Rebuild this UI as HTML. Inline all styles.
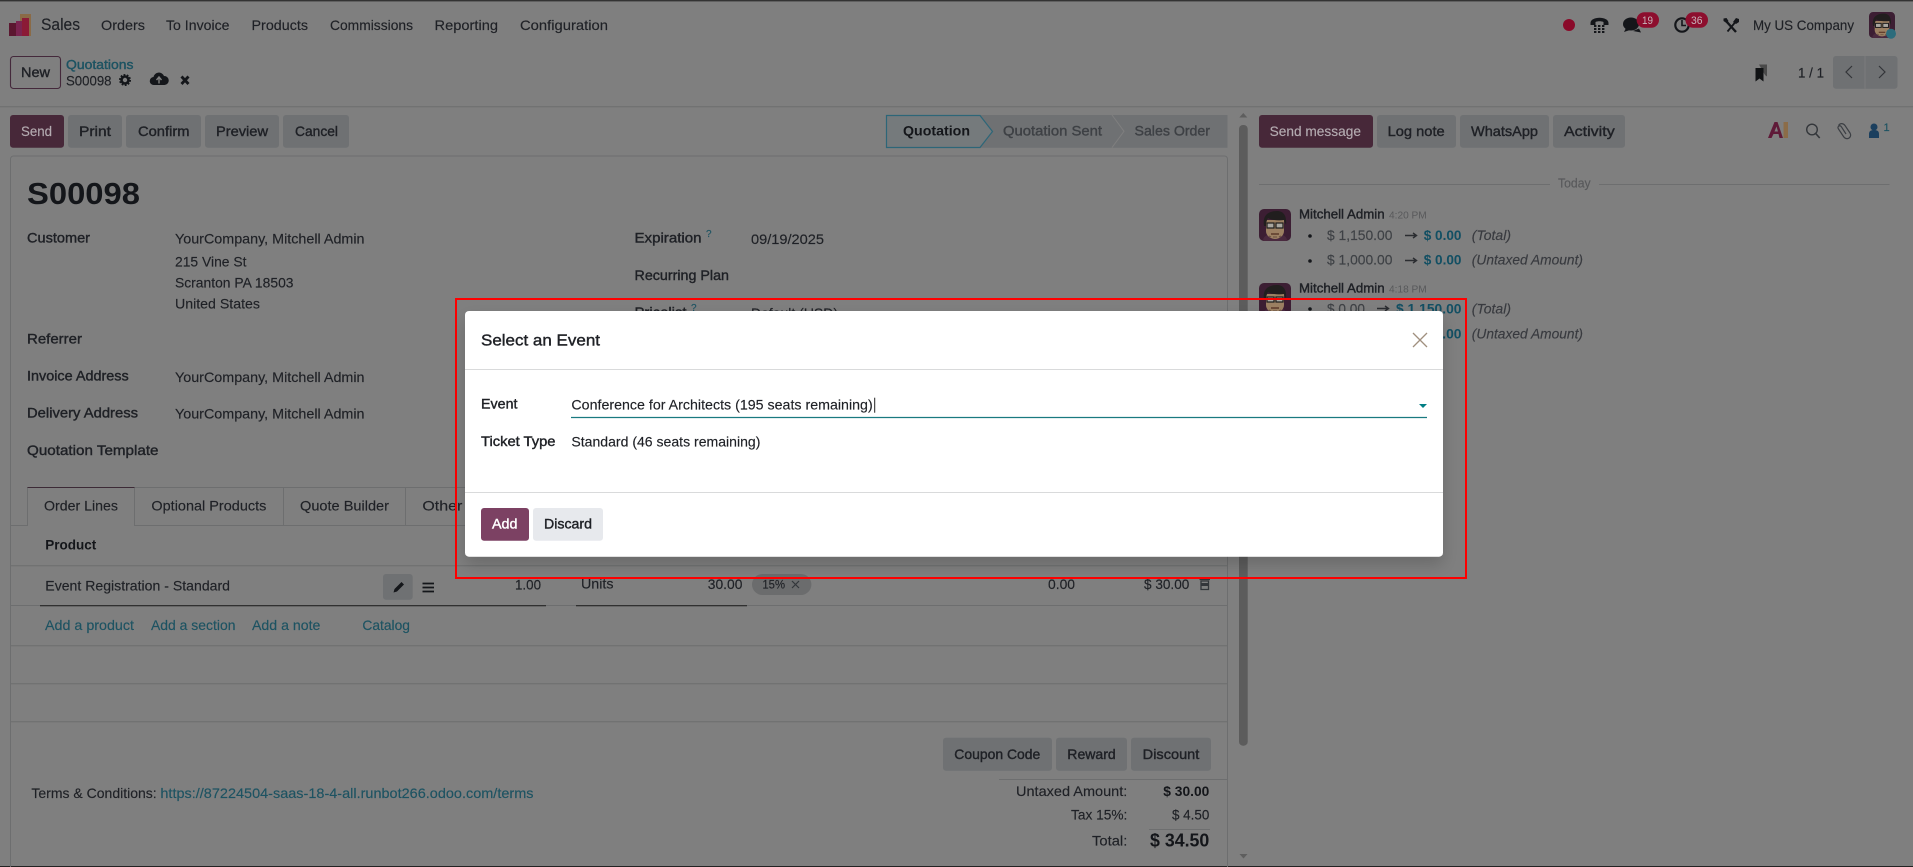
<!DOCTYPE html>
<html lang="en">
<head>
<meta charset="utf-8">
<title>S00098 - Select an Event</title>
<style>
html,body{margin:0;padding:0;width:1913px;height:867px;overflow:hidden;background:#7f7f7f}
svg{display:block}
text{font-family:"Liberation Sans",Arial,sans-serif;font-size:14px;color:#1f2126;fill:currentColor;stroke:currentColor;stroke-width:.15;white-space:pre}
.m{stroke-width:.4}
.b{font-weight:bold;stroke-width:0}
.l{color:#1d5362}
.g{color:#3e4145}
.mu{color:#58595b}
.i{font-style:italic;color:#383a3f}
.hl{color:#124f63;font-weight:bold;stroke-width:0}
.w{color:#fff}
.d{color:#14161a}
.lt{color:#b4abb1}
.ln{stroke:#6d6e6f;stroke-width:1;fill:none}
.btn{fill:#6f7173}
</style>
</head>
<body>
<svg width="1913" height="867" viewBox="0 0 1913 867" xmlns="http://www.w3.org/2000/svg">
<defs>
<filter id="sh" x="-10%" y="-10%" width="120%" height="130%"><feDropShadow dx="0" dy="8" stdDeviation="8" flood-color="#000" flood-opacity=".17"/></filter>
<symbol id="av" viewBox="0 0 32 32">
<rect width="32" height="32" rx="5" fill="#3c1e33"/>
<path d="M4 32c0-5 4-7 12-7s12 2 12 7z" fill="#4a2a3f"/>
<path d="M7 11h18v11c0 5-5 8-9 8s-9-3-9-8z" fill="#9c8062"/>
<path d="M5 17C3 6 10 2 18 2c6 0 10 4 9 14l-2-5C19 12 12 11 9 9c-1 2-2 4-2 8z" fill="#211e1e"/>
<rect x="8" y="14" width="7" height="5" fill="#a9a69f" stroke="#1d1d1d" stroke-width="1.200"/>
<rect x="17" y="14" width="7" height="5" fill="#a9a69f" stroke="#1d1d1d" stroke-width="1.200"/>
<path d="M12 25h8" stroke="#5d3a2a" stroke-width="1.500"/>
<path d="M10 27l2 1M20 28l2-1M14 28h4" stroke="#6a5040" stroke-width="1"/>
</symbol>
</defs>

<rect width="1913" height="867" fill="#7f7f7f"/>
<rect width="1913" height="1.400" fill="#333"/>
<rect y="866" width="1913" height="1" fill="#222"/>

<!-- navbar -->
<rect x="20" y="14" width="11" height="22" fill="#8a6a46"/>
<rect x="9" y="23" width="10" height="13" fill="#5b1730"/>
<rect x="16" y="21" width="7" height="15" fill="#7a2450"/>
<rect x="22" y="18" width="7" height="18" fill="#8b1a36"/>
<text x="41" y="30" textLength="39" lengthAdjust="spacingAndGlyphs" style="font-size:17px">Sales</text>
<text x="101" y="30" textLength="44" lengthAdjust="spacingAndGlyphs">Orders</text>
<text x="166" y="30" textLength="63.500" lengthAdjust="spacingAndGlyphs">To Invoice</text>
<text x="251.500" y="30" textLength="56.500" lengthAdjust="spacingAndGlyphs">Products</text>
<text x="330" y="30" textLength="83" lengthAdjust="spacingAndGlyphs">Commissions</text>
<text x="434.500" y="30" textLength="63.500" lengthAdjust="spacingAndGlyphs">Reporting</text>
<text x="520" y="30" textLength="88" lengthAdjust="spacingAndGlyphs">Configuration</text>

<!-- systray -->
<circle cx="1569" cy="25" r="6" fill="#8a0a2a"/>
<path d="M1590.500 23c0-7 18-7 18 0v2h-5v-3c-2-1-6-1-8 0v3h-5z" fill="#14161a"/>
<g fill="#14161a"><rect x="1594" y="25" width="2.400" height="2"/><rect x="1598" y="25" width="2.400" height="2"/><rect x="1602" y="25" width="2.400" height="2"/><rect x="1594" y="28" width="2.400" height="2"/><rect x="1598" y="28" width="2.400" height="2"/><rect x="1602" y="28" width="2.400" height="2"/><rect x="1594" y="31" width="2.400" height="2"/><rect x="1598" y="31" width="2.400" height="2"/><rect x="1602" y="31" width="2.400" height="2"/></g>
<ellipse cx="1631" cy="24" rx="8" ry="6.500" fill="#14161a"/><path d="M1626 28l-2 4 6-2z" fill="#14161a"/><path d="M1633 31l8 1.500-2-4" fill="#14161a"/>
<rect x="1636.600" y="12.300" width="22.400" height="15.400" rx="7.700" fill="#8d0e2e"/>
<text x="1642" y="24" textLength="11" lengthAdjust="spacingAndGlyphs" style="font-size:11px;color:#c8b6bc;stroke-width:0">19</text>
<circle cx="1682" cy="25" r="6.700" fill="none" stroke="#14161a" stroke-width="2.200"/><path d="M1682 20v5.500h4" fill="none" stroke="#14161a" stroke-width="1.600"/>
<rect x="1685.500" y="12.300" width="22.500" height="15.400" rx="7.700" fill="#8d0e2e"/>
<text x="1691" y="24" textLength="11.500" lengthAdjust="spacingAndGlyphs" style="font-size:11px;color:#c8b6bc;stroke-width:0">36</text>
<path d="M1726 21l10 11" stroke="#14161a" stroke-width="2.400" fill="none"/>
<path d="M1723.500 18.500l3-.5 2 3-2 2-3-2z" fill="#14161a"/>
<path d="M1737.500 19.500l-10 12" stroke="#14161a" stroke-width="1.800" fill="none"/>
<path d="M1733 22l3-4 3 1 0 3-3 2z" fill="#14161a"/>
<text x="1753" y="30" textLength="101" lengthAdjust="spacingAndGlyphs">My US Company</text>
<use href="#av" x="1869" y="12" width="26" height="26"/>
<circle cx="1891" cy="33.700" r="5" fill="#2c6c7c"/>

<!-- control panel -->
<rect x="10.500" y="56.500" width="50" height="32" rx="3" fill="none" stroke="#44293b" stroke-width="1.100"/>
<text x="21" y="77" textLength="29" lengthAdjust="spacingAndGlyphs" class="m">New</text>
<text x="66" y="69" textLength="67.500" lengthAdjust="spacingAndGlyphs" class="l m" style="font-size:13px">Quotations</text>
<text x="66" y="85.300" textLength="45.500" lengthAdjust="spacingAndGlyphs">S00098</text>
<circle cx="125" cy="80" r="3.500" fill="none" stroke="#14161a" stroke-width="2.600"/><circle cx="125" cy="80" r="5.200" fill="none" stroke="#14161a" stroke-width="1.600" stroke-dasharray="1.800 1.470"/>
<path d="M154 85a4 4 0 0 1-.5-8 5.500 5.500 0 0 1 10.500-1 4.500 4.500 0 0 1 .5 9z" fill="#14161a"/><path d="M159 83.500v-5.500M156.500 80l2.500-3 2.500 3" stroke="#7f7f7f" stroke-width="1.400" fill="none"/>
<path d="M181.500 76.500l7 7.500M188.500 76.500l-7 7.500" stroke="#14161a" stroke-width="2.800"/>
<path d="M1759 64.500h8v12l-2-1.500z" fill="#4a4a4a"/>
<path d="M1755.500 68h8v13.500l-4-3-4 3z" fill="#101214"/>
<text x="1798" y="77.300" textLength="26" lengthAdjust="spacingAndGlyphs">1 / 1</text>
<rect x="1833" y="56" width="64.500" height="32.700" rx="3" class="btn"/>
<path d="M1865 56v32.700" stroke="#7f7f7f" stroke-width=".8"/>
<path d="M1852 66l-6 6 6 6M1879 66l6 6-6 6" fill="none" stroke="#333539" stroke-width="1.200"/>
<path d="M0 106.700h1913" class="ln"/>

<!-- action buttons -->
<rect x="10" y="115" width="54" height="32.700" rx="3" fill="#472839"/>
<text x="21" y="136" textLength="31" lengthAdjust="spacingAndGlyphs" class="lt">Send</text>
<rect x="68" y="115" width="54" height="32.700" rx="3" class="btn"/>
<text x="79" y="136" textLength="32" lengthAdjust="spacingAndGlyphs" class="m">Print</text>
<rect x="126" y="115" width="75" height="32.700" rx="3" class="btn"/>
<text x="138" y="136" textLength="51.500" lengthAdjust="spacingAndGlyphs" class="m">Confirm</text>
<rect x="205" y="115" width="74" height="32.700" rx="3" class="btn"/>
<text x="216" y="136" textLength="52" lengthAdjust="spacingAndGlyphs" class="m">Preview</text>
<rect x="283" y="115" width="66" height="32.700" rx="3" class="btn"/>
<text x="295" y="136" textLength="43" lengthAdjust="spacingAndGlyphs" class="m">Cancel</text>

<!-- statusbar -->
<path d="M886 115h341.500v32.700H886z" fill="#6f7173"/>
<path d="M886.500 115.500H980l12.500 16-12.500 16H886.500z" fill="#757a7c" stroke="#2d6678" stroke-width="1.200"/>
<path d="M1112 115l12 16.300-12 16.300" fill="none" stroke="#7f7f7f" stroke-width="1"/>
<text x="903" y="135.700" textLength="67" lengthAdjust="spacingAndGlyphs" class="b d">Quotation</text>
<text x="1003" y="135.700" textLength="99" lengthAdjust="spacingAndGlyphs" class="g m">Quotation Sent</text>
<text x="1134.500" y="135.700" textLength="75.500" lengthAdjust="spacingAndGlyphs" class="g m">Sales Order</text>

<!-- scrollbar -->
<path d="M1243.300 113l-4 4.500h8z" fill="#5e5e5e"/>
<rect x="1239" y="125" width="8.700" height="620.700" rx="4" fill="#5c5c5c"/>
<path d="M1239.500 854h8l-4 4.500z" fill="#5e5e5e"/>

<!-- sheet -->
<path d="M10.500 867V159a3 3 0 0 1 3-3H1224.500a3 3 0 0 1 3 3V867" class="ln"/>
<text x="27" y="204" textLength="113" lengthAdjust="spacingAndGlyphs" class="b d" style="font-size:31px">S00098</text>

<text x="27" y="242.500" textLength="63" lengthAdjust="spacingAndGlyphs" class="m">Customer</text>
<text x="175" y="243.300" textLength="189.500" lengthAdjust="spacingAndGlyphs">YourCompany, Mitchell Admin</text>
<text x="175" y="266.300" textLength="71.500" lengthAdjust="spacingAndGlyphs">215 Vine St</text>
<text x="175" y="287.300" textLength="118.500" lengthAdjust="spacingAndGlyphs">Scranton PA 18503</text>
<text x="175" y="308.500" textLength="85" lengthAdjust="spacingAndGlyphs">United States</text>
<text x="27" y="343.500" textLength="55" lengthAdjust="spacingAndGlyphs" class="m">Referrer</text>
<text x="27" y="380.500" textLength="101.700" lengthAdjust="spacingAndGlyphs" class="m">Invoice Address</text>
<text x="175" y="382" textLength="189.500" lengthAdjust="spacingAndGlyphs">YourCompany, Mitchell Admin</text>
<text x="27" y="417.500" textLength="111" lengthAdjust="spacingAndGlyphs" class="m">Delivery Address</text>
<text x="175" y="418.500" textLength="189.500" lengthAdjust="spacingAndGlyphs">YourCompany, Mitchell Admin</text>
<text x="27" y="455" textLength="131.500" lengthAdjust="spacingAndGlyphs" class="m">Quotation Template</text>

<text x="634.500" y="242.700" textLength="67" lengthAdjust="spacingAndGlyphs" class="m">Expiration</text>
<text x="706" y="237" class="l" style="font-size:10px">?</text>
<text x="751" y="244" textLength="73" lengthAdjust="spacingAndGlyphs">09/19/2025</text>
<text x="634.500" y="280" textLength="94.500" lengthAdjust="spacingAndGlyphs" class="m">Recurring Plan</text>
<text x="634.500" y="317" textLength="52" lengthAdjust="spacingAndGlyphs" class="m">Pricelist</text>
<text x="691" y="311" class="l" style="font-size:10px">?</text>
<text x="751" y="318" textLength="87" lengthAdjust="spacingAndGlyphs">Default (USD)</text>

<!-- tabs -->
<path d="M10.500 525.500H27.500V487.500H134.500V525.500H1227" class="ln"/>
<path d="M27.500 487.500H134.500" stroke="#3c2a36" stroke-width="1"/>
<path d="M134.500 487.500H1227M283.500 487.500v38M405.500 487.500v38" class="ln"/>
<text x="44" y="510.700" textLength="74" lengthAdjust="spacingAndGlyphs">Order Lines</text>
<text x="151.400" y="510.700" textLength="115" lengthAdjust="spacingAndGlyphs">Optional Products</text>
<text x="300" y="510.700" textLength="89" lengthAdjust="spacingAndGlyphs">Quote Builder</text>
<text x="422.400" y="510.700" textLength="71" lengthAdjust="spacingAndGlyphs">Other Info</text>

<!-- table -->
<text x="45.300" y="549.300" textLength="51" lengthAdjust="spacingAndGlyphs" class="b d">Product</text>
<path d="M10.500 565.700H1227M10.500 605.500H1227M10.500 645.700H1227M10.500 683.700H1227M10.500 721.700H1227" class="ln"/>
<text x="45.300" y="590.700" textLength="184.700" lengthAdjust="spacingAndGlyphs">Event Registration - Standard</text>
<rect x="383" y="574" width="29.700" height="25.700" rx="3" class="btn"/>
<path d="M393.500 592.500l1-3.500 7-7 2.500 2.500-7 7z" fill="#14161a"/>
<path d="M422.500 583.500h11.500M422.500 587.500h11.500M422.500 591.500h11.500" stroke="#14161a" stroke-width="1.800"/>
<path d="M40 605.700H546M576 605.700H747" stroke="#1c1c1c" stroke-width="1"/>
<text x="515" y="589.300" textLength="26" lengthAdjust="spacingAndGlyphs">1.00</text>
<text x="581" y="588.700" textLength="32.500" lengthAdjust="spacingAndGlyphs">Units</text>
<text x="707.800" y="589" textLength="34.600" lengthAdjust="spacingAndGlyphs">30.00</text>
<rect x="752" y="574" width="59.400" height="21" rx="10.500" fill="#6b6c6d"/>
<text x="762.400" y="588.500" textLength="22.600" lengthAdjust="spacingAndGlyphs" style="font-size:12px">15%</text>
<path d="M792 581l7 7M799 581l-7 7" stroke="#33363a" stroke-width="1.200"/>
<text x="1048" y="589" textLength="27" lengthAdjust="spacingAndGlyphs">0.00</text>
<text x="1144" y="589" textLength="45.300" lengthAdjust="spacingAndGlyphs">$ 30.00</text>
<path d="M1199.500 579.500h10.500M1203 579.500v-1.500h3.500v1.500" fill="none" stroke="#33363a" stroke-width="1.200"/>
<path d="M1201 581v8.500h7.500V581z" fill="none" stroke="#33363a" stroke-width="1.300"/>
<rect x="1201" y="583" width="7.500" height="3" fill="#33363a"/>
<text x="45" y="630" textLength="89" lengthAdjust="spacingAndGlyphs" class="l">Add a product</text>
<text x="151" y="630" textLength="84.500" lengthAdjust="spacingAndGlyphs" class="l">Add a section</text>
<text x="252" y="630" textLength="68.400" lengthAdjust="spacingAndGlyphs" class="l">Add a note</text>
<text x="362.400" y="630" textLength="47.600" lengthAdjust="spacingAndGlyphs" class="l">Catalog</text>

<!-- footer -->
<rect x="943" y="737.700" width="109" height="33" rx="3" class="btn"/>
<text x="954.300" y="759" textLength="86" lengthAdjust="spacingAndGlyphs" class="m">Coupon Code</text>
<rect x="1056" y="737.700" width="71" height="33" rx="3" class="btn"/>
<text x="1067.300" y="759" textLength="48.400" lengthAdjust="spacingAndGlyphs" class="m">Reward</text>
<rect x="1131" y="737.700" width="80" height="33" rx="3" class="btn"/>
<text x="1142.700" y="759" textLength="56.600" lengthAdjust="spacingAndGlyphs" class="m">Discount</text>
<path d="M999 779.500H1227M1149 829.500H1210" class="ln"/>
<text x="31.400" y="798" textLength="125.300" lengthAdjust="spacingAndGlyphs">Terms &amp; Conditions:</text>
<text x="160.400" y="798" textLength="373.100" lengthAdjust="spacingAndGlyphs" class="l">https://87224504-saas-18-4-all.runbot266.odoo.com/terms</text>
<text x="1016" y="796" textLength="111.300" lengthAdjust="spacingAndGlyphs">Untaxed Amount:</text>
<text x="1163.300" y="796" textLength="46" lengthAdjust="spacingAndGlyphs" class="b d">$ 30.00</text>
<text x="1071" y="819.300" textLength="56.300" lengthAdjust="spacingAndGlyphs">Tax 15%:</text>
<text x="1172" y="819.300" textLength="37.300" lengthAdjust="spacingAndGlyphs">$ 4.50</text>
<text x="1092" y="845.300" textLength="35.300" lengthAdjust="spacingAndGlyphs">Total:</text>
<text x="1150" y="846.700" textLength="59.300" lengthAdjust="spacingAndGlyphs" class="b d" style="font-size:18px">$ 34.50</text>

<!-- chatter -->
<rect x="1259" y="115" width="114" height="32.700" rx="3" fill="#472839"/>
<text x="1269.600" y="136" textLength="91.400" lengthAdjust="spacingAndGlyphs" class="lt">Send message</text>
<rect x="1377" y="115" width="79" height="32.700" rx="3" class="btn"/>
<text x="1387.600" y="136" textLength="57.100" lengthAdjust="spacingAndGlyphs" class="m">Log note</text>
<rect x="1460" y="115" width="89" height="32.700" rx="3" class="btn"/>
<text x="1471" y="136" textLength="67" lengthAdjust="spacingAndGlyphs" class="m">WhatsApp</text>
<rect x="1553" y="115" width="72" height="32.700" rx="3" class="btn"/>
<text x="1564" y="136" textLength="50.700" lengthAdjust="spacingAndGlyphs" class="m">Activity</text>

<path d="M1768 138l6.500-16h3l5.500 16h-3.500l-1-4h-5l-2 4zM1774.500 131.500h3.500l-1.500-5z" fill="#5f1a38" fill-rule="evenodd"/>
<rect x="1783.500" y="122" width="4.500" height="16" fill="#8b6c48"/>
<circle cx="1812" cy="129.500" r="5.300" fill="none" stroke="#33363a" stroke-width="1.400"/><path d="M1815.700 133.500l4 4.500" stroke="#33363a" stroke-width="1.600"/>
<path d="M1838.500 125.500c2-3 5-2 6.500 0l5 7.500c1.500 2.500 0 5-2 5.500s-3.500-.5-4.500-2l-5-7.500c-1-1.500-.5-2.500.5-3s2 0 2.500 1l4.500 7" fill="none" stroke="#3c3f44" stroke-width="1.200"/>
<circle cx="1874" cy="127" r="3.500" fill="#1b3f5e"/><path d="M1869 138v-4c0-3 2-4 5-4s5 1 5 4v4z" fill="#1b3f5e"/>
<text x="1883.500" y="131" class="l" style="font-size:11px">1</text>

<path d="M1259 184.500H1550M1599 184.500H1889.500" class="ln"/>
<text x="1558" y="187.700" textLength="32.600" lengthAdjust="spacingAndGlyphs" class="mu" style="font-size:13px">Today</text>

<use href="#av" x="1259" y="209" width="32" height="32"/>
<text x="1299" y="218.700" textLength="85.600" lengthAdjust="spacingAndGlyphs" class="m" style="font-size:13px">Mitchell Admin</text>
<text x="1389" y="218.700" textLength="37.700" lengthAdjust="spacingAndGlyphs" class="mu" style="font-size:10.500px;stroke-width:0">4:20 PM</text>
<circle cx="1310" cy="236" r="1.800" fill="#14161a"/>
<text x="1327" y="240" textLength="65.400" lengthAdjust="spacingAndGlyphs" class="g">$ 1,150.00</text>
<path d="M1405 235.500h11M1413 233l3.500 2.500-3.500 2.500" fill="none" stroke="#2b2d31" stroke-width="1.400"/>
<text x="1423.700" y="240" textLength="37.800" lengthAdjust="spacingAndGlyphs" class="hl">$ 0.00</text>
<text x="1471.800" y="240" textLength="39.200" lengthAdjust="spacingAndGlyphs" class="i">(Total)</text>
<circle cx="1310" cy="261" r="1.800" fill="#14161a"/>
<text x="1327" y="264.500" textLength="65.400" lengthAdjust="spacingAndGlyphs" class="g">$ 1,000.00</text>
<path d="M1405 260.500h11M1413 258l3.500 2.500-3.500 2.500" fill="none" stroke="#2b2d31" stroke-width="1.400"/>
<text x="1423.700" y="264.500" textLength="37.800" lengthAdjust="spacingAndGlyphs" class="hl">$ 0.00</text>
<text x="1471.800" y="264.500" textLength="111.200" lengthAdjust="spacingAndGlyphs" class="i">(Untaxed Amount)</text>

<use href="#av" x="1259" y="283" width="32" height="32"/>
<text x="1299" y="292.700" textLength="85.600" lengthAdjust="spacingAndGlyphs" class="m" style="font-size:13px">Mitchell Admin</text>
<text x="1389" y="292.700" textLength="37.700" lengthAdjust="spacingAndGlyphs" class="mu" style="font-size:10.500px;stroke-width:0">4:18 PM</text>
<circle cx="1310" cy="309" r="1.800" fill="#14161a"/>
<text x="1327" y="313.500" textLength="38" lengthAdjust="spacingAndGlyphs" class="g">$ 0.00</text>
<path d="M1377 308.500h11M1385 306l3.500 2.500-3.500 2.500" fill="none" stroke="#2b2d31" stroke-width="1.400"/>
<text x="1396" y="313.500" textLength="65.500" lengthAdjust="spacingAndGlyphs" class="hl">$ 1,150.00</text>
<text x="1471.800" y="313.500" textLength="39.200" lengthAdjust="spacingAndGlyphs" class="i">(Total)</text>
<text x="1396" y="338.500" textLength="65.500" lengthAdjust="spacingAndGlyphs" class="hl">$ 1,000.00</text>
<text x="1471.800" y="338.500" textLength="111.200" lengthAdjust="spacingAndGlyphs" class="i">(Untaxed Amount)</text>

<!-- annotation rectangle -->
<rect x="456" y="299" width="1010" height="279" fill="none" stroke="#f00" stroke-width="2"/>

<!-- modal -->
<rect x="465" y="311" width="978" height="245.700" rx="4" fill="#fff" filter="url(#sh)"/>
<path d="M465 369.500H1443M465 492.500H1443" stroke="#d9dadb" stroke-width="1"/>
<text x="481" y="345.500" textLength="119" lengthAdjust="spacingAndGlyphs" class="m" style="font-size:16px">Select an Event</text>
<path d="M1413 333l14 14M1427 333l-14 14" stroke="#a0907f" stroke-width="1.300" fill="none"/>
<text x="481" y="408.500" textLength="36.500" lengthAdjust="spacingAndGlyphs" class="m">Event</text>
<text x="571.400" y="409.300" textLength="301.300" lengthAdjust="spacingAndGlyphs">Conference for Architects (195 seats remaining)</text>
<path d="M874.700 397.700v15" stroke="#222" stroke-width="1"/>
<path d="M571 417.500H1427" stroke="#1a7a80" stroke-width="1.300"/>
<path d="M1419 404h8l-4 4z" fill="#017e84"/>
<text x="481" y="446" textLength="74.500" lengthAdjust="spacingAndGlyphs" class="m">Ticket Type</text>
<text x="571.400" y="446.300" textLength="189" lengthAdjust="spacingAndGlyphs">Standard (46 seats remaining)</text>
<rect x="481" y="508" width="48" height="32.700" rx="3" fill="#7c4163"/>
<text x="492" y="528.700" textLength="25.500" lengthAdjust="spacingAndGlyphs" class="w m">Add</text>
<rect x="533" y="508" width="70" height="32.700" rx="3" fill="#e7e9ed"/>
<text x="544" y="528.700" textLength="48" lengthAdjust="spacingAndGlyphs" class="m">Discard</text>
</svg>
</body>
</html>
